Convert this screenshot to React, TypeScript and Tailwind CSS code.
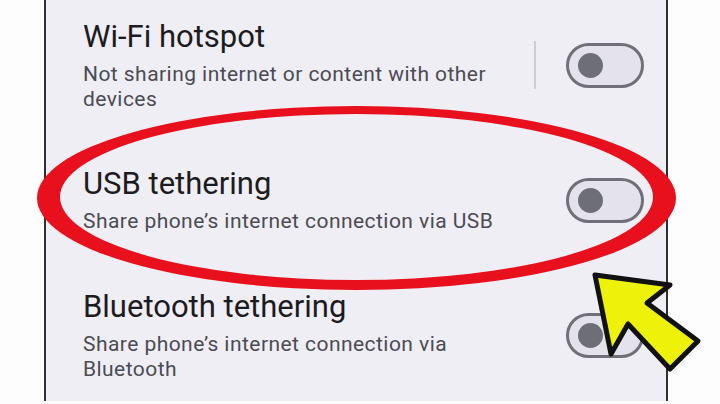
import React from "react";

function Toggle() {
  return (
    <div className="w-[78px] h-[45px] rounded-full border-[3px] border-[#707078] bg-[#e4e3eb] flex items-center pl-[9px] shrink-0">
      <div className="w-[25px] h-[25px] rounded-full bg-[#6e6e77]" />
    </div>
  );
}

function Row({
  title,
  lines,
  h,
  divider,
}: {
  title: string;
  lines: string[];
  h: string;
  divider?: boolean;
}) {
  return (
    <div className={`${h} flex items-center justify-between`}>
      <div className="flex flex-col">
        <div className="text-[31px] leading-[36px] text-[#1c1b20]">{title}</div>
        <div className="mt-[7px] text-[21px] leading-[25px] tracking-[0.45px] text-[#4b4b53]">
          {lines.map((l, i) => (
            <div key={i}>{l}</div>
          ))}
        </div>
      </div>
      <div className="flex items-center">
        {divider && <div className="w-[2px] h-[48px] bg-[#cdcdd4] mr-[30px]" />}
        <Toggle />
      </div>
    </div>
  );
}

export default function App() {
  return (
    <div
      className="relative w-[720px] h-[404px] bg-[#fdfdfd] overflow-hidden flex"
      style={{ fontFamily: "Roboto, 'Noto Sans', sans-serif" }}
    >
      <div className="ml-[44px] w-[624px] h-[401px] border-l-2 border-r-2 border-[#2e2e30] bg-[#efeef5] flex flex-col pl-[37px] pr-[22px]">
        <Row
          h="h-[130px]"
          title="Wi-Fi hotspot"
          lines={["Not sharing internet or content with other", "devices"]}
          divider
        />
        <Row
          h="h-[140px]"
          title="USB tethering"
          lines={["Share phone’s internet connection via USB"]}
        />
        <Row
          h="h-[130px]"
          title="Bluetooth tethering"
          lines={["Share phone’s internet connection via", "Bluetooth"]}
        />
      </div>
      <svg
        className="absolute left-0 top-0 pointer-events-none"
        width="720"
        height="404"
        viewBox="0 0 720 404"
      >
        <path
          fillRule="evenodd"
          fill="#e8101c"
          d="M37 198 A319.5 92 0 1 0 676 198 A319.5 92 0 1 0 37 198 Z M60 197 A296.5 83 0 1 1 653 197 A296.5 83 0 1 1 60 197 Z"
        />
        <polygon
          points="595,275 670,285 647,303 698,341 670,369 628,324 611,354"
          fill="#eef20a"
          stroke="#111"
          strokeWidth="5"
          strokeLinejoin="round"
        />
      </svg>
    </div>
  );
}
